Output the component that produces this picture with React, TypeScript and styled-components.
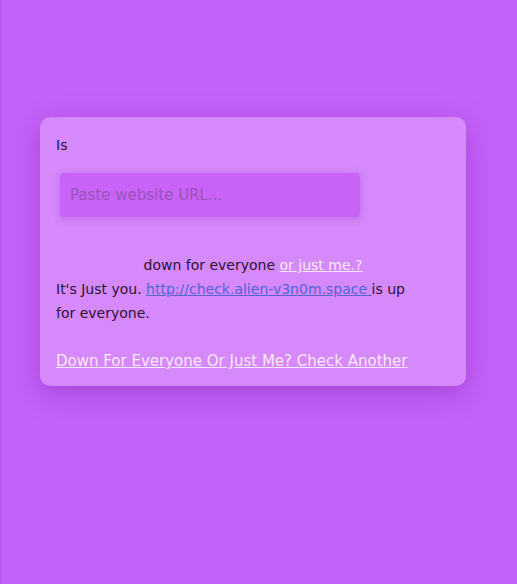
import React from "react";
import styled, { createGlobalStyle } from "styled-components";

const Global = createGlobalStyle`
  html, body { margin: 0; padding: 0; background: #c461f8; }
  body { font-family: "DejaVu Sans", "Noto Sans", sans-serif; }
`;

const Page = styled.div`
  min-height: 584px;
  box-sizing: border-box;
  border-left: 1px solid #b258e0;
  padding: 117px 51px 0 39px;
  background: #c461f8;
`;

const Card = styled.div`
  box-sizing: border-box;
  width: 426px;
  background: #d589fb;
  border-radius: 10px;
  padding: 16px 16px 13px 16px;
  box-shadow: 0 8px 28px rgba(110, 20, 160, 0.35);
  color: #2e1236;
  font-size: 14px;
  line-height: 24px;
`;

const Label = styled.div`
  height: 24px;
`;

const UrlInput = styled.input`
  display: block;
  box-sizing: border-box;
  width: 300px;
  height: 44px;
  margin: 16px 0 0 4px;
  border: none;
  outline: none;
  border-radius: 4px;
  background: #c963f8;
  box-shadow: 0 2px 8px rgba(120, 30, 160, 0.25);
  padding: 0 10px;
  font-family: inherit;
  font-size: 15px;
  color: #2e1236;
  &::placeholder {
    color: #9b52bb;
    font-weight: 500;
  }
`;

const Center = styled.div`
  text-align: center;
  margin-top: 36px;
`;

const LightLink = styled.a`
  color: #fbe6ff;
  text-decoration: underline;
`;

const Result = styled.p`
  margin: 0;
  max-width: 360px;
`;

const BlueLink = styled.a`
  color: #5464d6;
  text-decoration: underline;
`;

const Another = styled.a`
  display: inline-block;
  margin-top: 24px;
  color: #fbe6ff;
  text-decoration: underline;
  font-size: 15px;
`;

export default function App() {
  return (
    <>
      <Global />
      <Page>
        <Card>
          <Label>Is</Label>
          <UrlInput placeholder="Paste website URL..." />
          <Center>
            down for everyone <LightLink href="#">or just me.?</LightLink>
          </Center>
          <Result>
            It's Just you. <BlueLink href="#">http://check.alien-v3n0m.space </BlueLink>is up for everyone.
          </Result>
          <Another href="#">Down For Everyone Or Just Me? Check Another</Another>
        </Card>
      </Page>
    </>
  );
}
